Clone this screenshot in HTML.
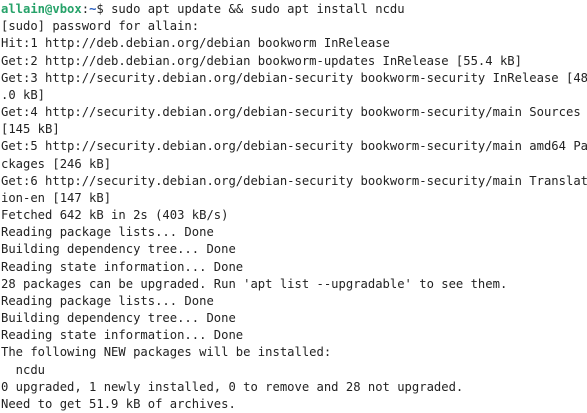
<!DOCTYPE html>
<html><head><style>
html,body{margin:0;padding:0;background:#fff;}
body{width:587px;height:408px;overflow:hidden;}
pre{margin:0;padding:1px 0 0 1px;font-family:"DejaVu Sans Mono","Liberation Mono",monospace;font-size:12.2px;line-height:17.17px;color:#222;white-space:pre;}
.g{color:#26a269;font-weight:bold;}
.b{color:#2a5fc0;font-weight:bold;}
</style></head><body>
<pre><span class="g">allain@vbox</span>:<span class="b">~</span>$ sudo apt update &amp;&amp; sudo apt install ncdu
[sudo] password for allain:
Hit:1 http://deb.debian.org/debian bookworm InRelease
Get:2 http://deb.debian.org/debian bookworm-updates InRelease [55.4 kB]
Get:3 http://security.debian.org/debian-security bookworm-security InRelease [48
.0 kB]
Get:4 http://security.debian.org/debian-security bookworm-security/main Sources
[145 kB]
Get:5 http://security.debian.org/debian-security bookworm-security/main amd64 Pa
ckages [246 kB]
Get:6 http://security.debian.org/debian-security bookworm-security/main Translat
ion-en [147 kB]
Fetched 642 kB in 2s (403 kB/s)
Reading package lists... Done
Building dependency tree... Done
Reading state information... Done
28 packages can be upgraded. Run 'apt list --upgradable' to see them.
Reading package lists... Done
Building dependency tree... Done
Reading state information... Done
The following NEW packages will be installed:
  ncdu
0 upgraded, 1 newly installed, 0 to remove and 28 not upgraded.
Need to get 51.9 kB of archives.</pre>
</body></html>
